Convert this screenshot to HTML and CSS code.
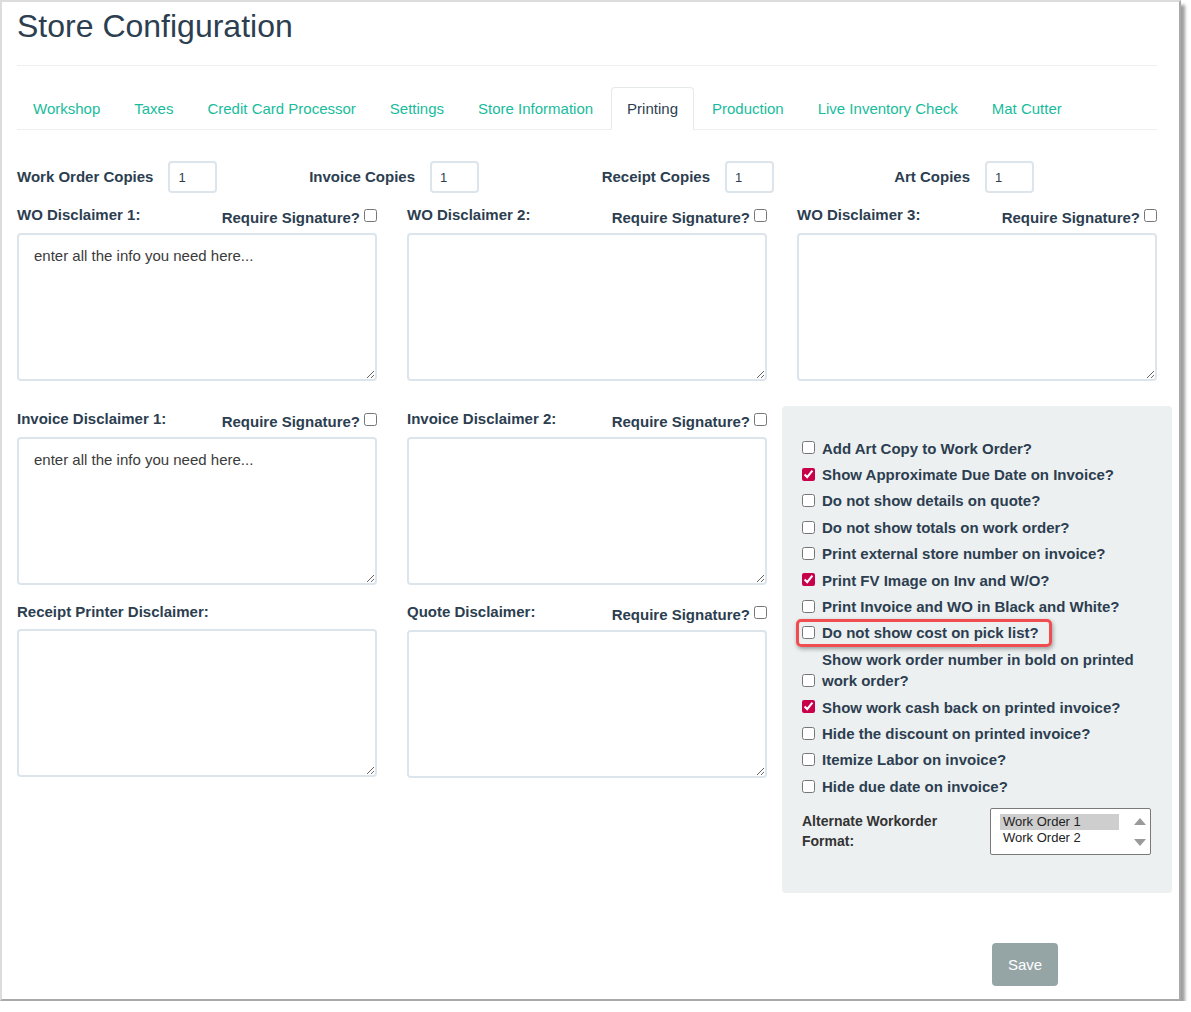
FILE: index.html
```html
<!DOCTYPE html>
<html>
<head>
<meta charset="utf-8">
<title>Store Configuration</title>
<link rel="stylesheet" href="styles.css">
</head>
<body>
<div class="frame">
  <div class="container">
    <h1 class="title">Store Configuration</h1>
    <hr class="rule">
    <ul class="tabs">
      <li><a>Workshop</a></li>
      <li><a>Taxes</a></li>
      <li><a>Credit Card Processor</a></li>
      <li><a>Settings</a></li>
      <li><a>Store Information</a></li>
      <li class="active"><a>Printing</a></li>
      <li><a>Production</a></li>
      <li><a>Live Inventory Check</a></li>
      <li><a>Mat Cutter</a></li>
    </ul>

    <div class="copies">
      <div class="copy c1"><label>Work Order Copies</label><input type="text" value="1"></div>
      <div class="copy c2"><label>Invoice Copies</label><input type="text" value="1"></div>
      <div class="copy c3"><label>Receipt Copies</label><input type="text" value="1"></div>
      <div class="copy c4"><label>Art Copies</label><input type="text" value="1"></div>
    </div>

    <div class="wo-row">
      <div class="field">
        <div class="label-row"><label class="lbl">WO Disclaimer 1:</label><span class="sig">Require Signature?<input type="checkbox"></span></div>
        <textarea>enter all the info you need here...</textarea>
      </div>
      <div class="field">
        <div class="label-row"><label class="lbl">WO Disclaimer 2:</label><span class="sig">Require Signature?<input type="checkbox"></span></div>
        <textarea></textarea>
      </div>
      <div class="field">
        <div class="label-row"><label class="lbl">WO Disclaimer 3:</label><span class="sig">Require Signature?<input type="checkbox"></span></div>
        <textarea></textarea>
      </div>
    </div>

    <div class="lower">
      <div class="col">
        <div class="field">
          <div class="label-row"><label class="lbl">Invoice Disclaimer 1:</label><span class="sig">Require Signature?<input type="checkbox"></span></div>
          <textarea>enter all the info you need here...</textarea>
        </div>
        <div class="field">
          <div class="label-row nosig"><label class="lbl">Receipt Printer Disclaimer:</label></div>
          <textarea></textarea>
        </div>
      </div>
      <div class="col">
        <div class="field">
          <div class="label-row"><label class="lbl">Invoice Disclaimer 2:</label><span class="sig">Require Signature?<input type="checkbox"></span></div>
          <textarea></textarea>
        </div>
        <div class="field">
          <div class="label-row"><label class="lbl">Quote Disclaimer:</label><span class="sig">Require Signature?<input type="checkbox"></span></div>
          <textarea></textarea>
        </div>
      </div>
      <div class="panel">
        <div class="opt"><input type="checkbox"><span>Add Art Copy to Work Order?</span></div>
        <div class="opt"><input type="checkbox" checked><span>Show Approximate Due Date on Invoice?</span></div>
        <div class="opt"><input type="checkbox"><span>Do not show details on quote?</span></div>
        <div class="opt"><input type="checkbox"><span>Do not show totals on work order?</span></div>
        <div class="opt"><input type="checkbox"><span>Print external store number on invoice?</span></div>
        <div class="opt"><input type="checkbox" checked><span>Print FV Image on Inv and W/O?</span></div>
        <div class="opt"><input type="checkbox"><span>Print Invoice and WO in Black and White?</span></div>
        <div class="opt"><input type="checkbox"><span>Do not show cost on pick list?</span><i class="highlight"></i></div>
        <div class="opt"><input type="checkbox"><span>Show work order number in bold on printed work order?</span></div>
        <div class="opt"><input type="checkbox" checked><span>Show work cash back on printed invoice?</span></div>
        <div class="opt"><input type="checkbox"><span>Hide the discount on printed invoice?</span></div>
        <div class="opt"><input type="checkbox"><span>Itemize Labor on invoice?</span></div>
        <div class="opt"><input type="checkbox"><span>Hide due date on invoice?</span></div>
        <div class="format">
          <label>Alternate Workorder Format:</label>
          <div class="listbox">
            <div class="opts">
              <div class="o sel">Work Order 1</div>
              <div class="o">Work Order 2</div>
            </div>
            <div class="scroll">
              <span class="arrow up"></span>
              <span class="arrow down"></span>
            </div>
          </div>
        </div>
      </div>
    </div>

    <div class="actions"><button class="save" type="button">Save</button></div>
  </div>
</div>
</body>
</html>
```
FILE: styles.css
```css
* { box-sizing: border-box; }
html, body { margin: 0; padding: 0; background: #fff; }
body {
  font-family: "Liberation Sans", Arial, Helvetica, sans-serif;
  font-size: 15px;
  color: #2c3e50;
}
.frame {
  width: 1181px;
  height: 1001px;
  background: #fff;
  border-left: 2px solid #dcdcdc;
  border-top: 2px solid #dcdcdc;
  border-right: 2px solid #a9a9a9;
  border-bottom: 2px solid #a9a9a9;
  box-shadow: 4px 5px 3px rgba(0, 0, 0, 0.38);
}
.container {
  width: 1140px;
  margin-left: 15px;
}
.title {
  margin: 7px 0 0;
  font-size: 32px;
  font-weight: 400;
  line-height: 35.2px;
  color: #2c3e50;
}
.rule {
  margin: 20.8px 0 0;
  height: 0;
  border: 0;
  border-top: 1px solid #eceeef;
}
.tabs {
  display: flex;
  margin: 21px 0 0;
  padding: 0;
  list-style: none;
  border-bottom: 1px solid #eceff0;
}
.tabs li { margin-bottom: -1px; }
.tabs a {
  display: block;
  padding: 10px 15px;
  margin-right: 2px;
  border: 1px solid transparent;
  border-radius: 4px 4px 0 0;
  line-height: 21.4px;
  color: #18bc9c;
}
.tabs li.active a {
  color: #2c3e50;
  background: #fff;
  border-color: #e6e9ea #e6e9ea transparent;
}

.copies {
  display: flex;
  align-items: center;
  margin-top: 31px;
}
.copy {
  flex: none;
  display: flex;
  align-items: center;
  justify-content: flex-end;
  gap: 15px;
}
.copy.c1 { width: 200px; justify-content: flex-start; }
.copy.c2 { width: 262px; }
.copy.c3 { width: 295px; }
.copy.c4 { width: 260px; }
.copy label {
  flex: none;
  white-space: nowrap;
  font-weight: 700;
  line-height: 21px;
  margin-bottom: 2px;
}
.copy input {
  flex: none;
  width: 49px;
  height: 32px;
  margin: 0;
  padding: 0 8px;
  border: 2px solid #dce4ec;
  border-radius: 4px;
  font: 13px "Liberation Sans", Arial, sans-serif;
  color: #2c3e50;
  background: #fff;
}

.wo-row {
  display: grid;
  grid-template-columns: repeat(3, 360px);
  column-gap: 30px;
  margin-top: 11px;
}
.label-row {
  display: flex;
  justify-content: space-between;
  align-items: flex-start;
  height: 29px;
}
.label-row.nosig { height: 28px; }
.lbl { font-weight: 700; line-height: 21px; }
.sig {
  margin-top: 3px;
  font-weight: 700;
  line-height: 21px;
  white-space: nowrap;
}
.sig input {
  width: 13px;
  height: 13px;
  margin: 0 0 0 4px;
  vertical-align: 1.5px;
}
textarea {
  display: block;
  width: 100%;
  height: 148px;
  margin: 0;
  padding: 10px 15px;
  border: 2px solid #dce4ec;
  border-radius: 4px;
  font: 15px/21.4px "Liberation Sans", Arial, sans-serif;
  color: #3b3b3b;
  background: #fff;
  outline: none;
}

.lower {
  display: grid;
  grid-template-columns: repeat(3, 390px);
  align-items: start;
  margin: 24.6px -15px 0;
}
.lower .col { padding: 2px 15px 0; }
.col .field + .field { margin-top: 16px; }

.panel {
  background: #ecf0f1;
  border-radius: 4px;
  padding: 31.5px 20px 38.7px;
}
.opt {
  position: relative;
  display: flex;
  align-items: flex-end;
  margin-bottom: 5px;
  font-weight: 700;
  line-height: 21.4px;
}
.opt input {
  flex: none;
  width: 13px;
  height: 13px;
  margin: 0 7px 4.5px 0;
  accent-color: #c8004b;
}
.highlight {
  position: absolute;
  left: -6px;
  top: -3px;
  width: 256px;
  height: 28px;
  border: 3px solid #ef4d4f;
  border-radius: 5px;
  box-shadow: 1px 2px 4px rgba(0, 0, 0, 0.35);
  pointer-events: none;
}

.format {
  display: flex;
  align-items: flex-start;
  margin-top: 10.5px;
}
.format label {
  width: 160px;
  margin: 3px 28px 0 0;
  font-size: 14px;
  font-weight: 700;
  line-height: 20px;
  color: #333;
}
.listbox {
  display: flex;
  width: 161px;
  height: 47px;
  border: 1px solid #7a7a7a;
  border-radius: 2px;
  background: #fff;
}
.opts {
  width: 128px;
  padding: 5.7px 0 0 9px;
  font-size: 13px;
  line-height: 16px;
  color: #222;
}
.o { padding-left: 3px; }
.o.sel { background: #cecece; }
.scroll {
  flex: 1;
  display: flex;
  flex-direction: column;
  justify-content: space-between;
  align-items: flex-end;
  padding: 9.7px 4px 7.3px 0;
}
.arrow {
  width: 0;
  height: 0;
  border-left: 6.5px solid transparent;
  border-right: 6.5px solid transparent;
}
.arrow.up { border-bottom: 7px solid #9a9a9a; }
.arrow.down { border-top: 7px solid #9a9a9a; }

.actions {
  display: flex;
  margin-top: 50px;
  padding-left: 975px;
}
.save {
  padding: 10.5px 16px;
  border: 0;
  border-radius: 4px;
  background: #95a5a6;
  color: #fff;
  font: 15px/21.4px "Liberation Sans", Arial, sans-serif;
}
```
